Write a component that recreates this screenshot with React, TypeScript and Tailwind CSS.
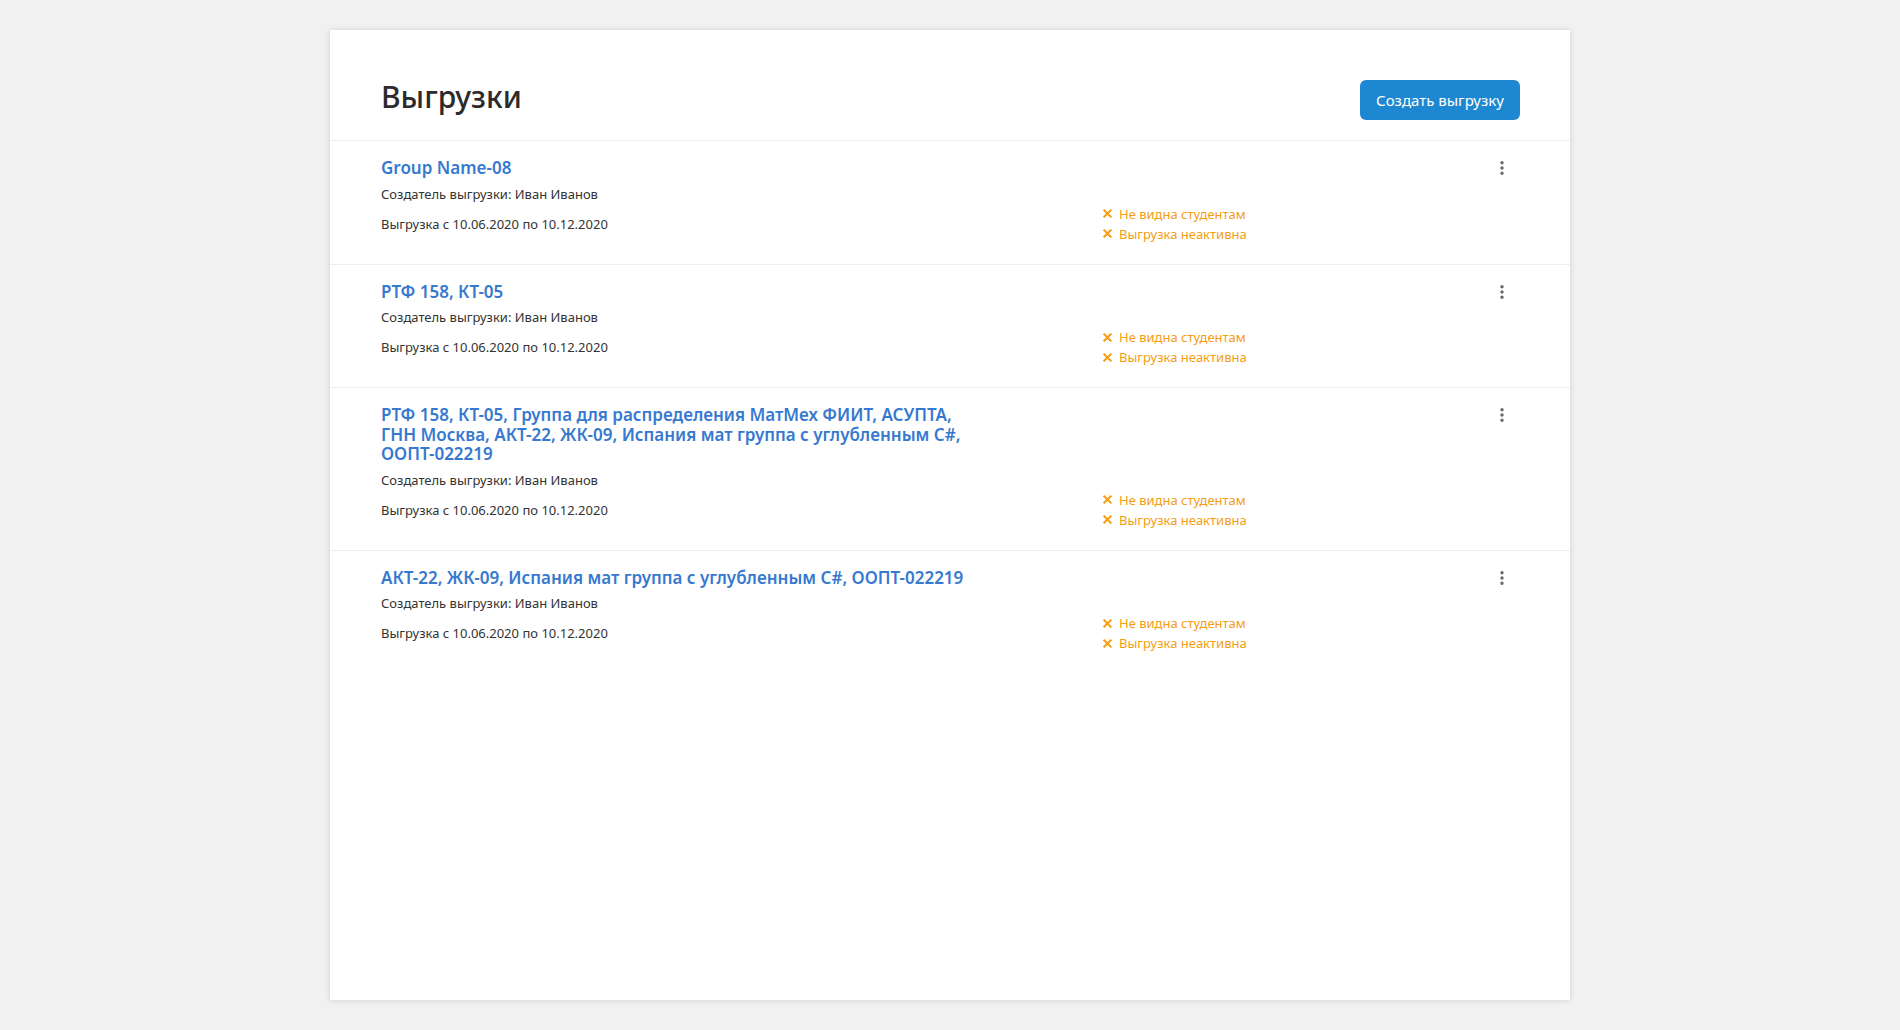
import { MoreVertical } from "lucide-react";

type Upload = {
  id: number;
  title: string;
  author: string;
  from: string;
  to: string;
};

const uploads: Upload[] = [
  { id: 1, title: "Group Name-08", author: "Иван Иванов", from: "10.06.2020", to: "10.12.2020" },
  { id: 2, title: "РТФ 158, КТ-05", author: "Иван Иванов", from: "10.06.2020", to: "10.12.2020" },
  {
    id: 3,
    title:
      "РТФ 158, КТ-05, Группа для распределения МатМех ФИИТ, АСУПТА, ГНН Москва, АКТ-22, ЖК-09, Испания мат группа с углубленным C#, ООПТ-022219",
    author: "Иван Иванов",
    from: "10.06.2020",
    to: "10.12.2020",
  },
  {
    id: 4,
    title: "АКТ-22, ЖК-09, Испания мат группа с углубленным C#, ООПТ-022219",
    author: "Иван Иванов",
    from: "10.06.2020",
    to: "10.12.2020",
  },
];

function Cross() {
  return (
    <svg width="9" height="9" viewBox="0 0 10 10" className="shrink-0">
      <path d="M1.5 1.5 L8.5 8.5 M8.5 1.5 L1.5 8.5" stroke="#f59d12" strokeWidth="2.2" strokeLinecap="square" />
    </svg>
  );
}

function UploadRow({ item }: { item: Upload }) {
  return (
    <div className="flex border-b border-[#eeeeee] pl-[51px] pr-[58px] last:border-b-0">
      <div className="w-[722px] shrink-0 pt-[17px] pb-[30px]">
        <a href="#" className="block max-w-[600px] text-[17px] font-semibold leading-[19.5px] text-[#3779cf]">
          {item.title}
        </a>
        <p className="mt-[6px] text-[13px] leading-[20px] text-[#333]">
          Создатель выгрузки: {item.author}
        </p>
        <p className="mt-[10px] text-[13px] leading-[20px] text-[#333]">
          Выгрузка с {item.from} по {item.to}
        </p>
      </div>

      <div className="self-end pb-[20px] text-[13px] leading-[20px] text-[#f59d12]">
        <div className="flex items-center gap-[7px]">
          <Cross />
          <span>Не видна студентам</span>
        </div>
        <div className="flex items-center gap-[7px]">
          <Cross />
          <span>Выгрузка неактивна</span>
        </div>
      </div>

      <button className="ml-auto mt-[17px] flex h-[20px] w-[20px] items-center justify-center text-[#666]">
        <MoreVertical size={18} strokeWidth={2.5} />
      </button>
    </div>
  );
}

export default function App() {
  return (
    <div
      className="min-h-[1030px] bg-[#f1f1f1] pt-[30px] pl-[330px]"
      style={{ fontFamily: '"Noto Sans", "Open Sans", sans-serif' }}
    >
      <div className="h-[970px] w-[1240px] bg-white shadow-[0_0_6px_rgba(0,0,0,0.14)]">
        <div className="flex h-[111px] items-end justify-between border-b border-[#eeeeee] pb-[20px] pl-[51px] pr-[50px]">
          <h1 className="mb-[3px] text-[30px] font-medium leading-[40px] text-[#2b2b2b]">Выгрузки</h1>
          <button className="h-[40px] w-[160px] rounded-[6px] bg-[#1e87d1] text-[15px] text-white">
            Создать выгрузку
          </button>
        </div>
        {uploads.map((u) => (
          <UploadRow key={u.id} item={u} />
        ))}
      </div>
    </div>
  );
}
